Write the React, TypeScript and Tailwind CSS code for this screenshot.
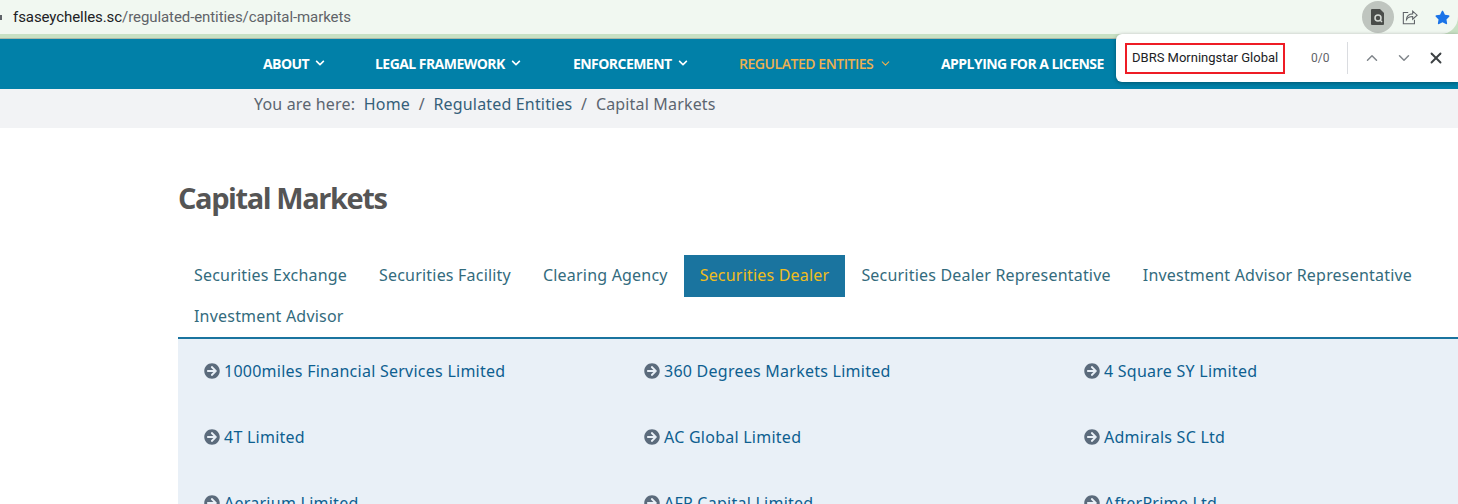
import React from 'react';
import { FaArrowCircleRight, FaChevronDown, FaStar } from 'react-icons/fa';
import { LuChevronUp, LuChevronDown, LuX } from 'react-icons/lu';

const navItems = [
    { label: 'ABOUT', width: 'w-[112px]', arrow: true },
    { label: 'LEGAL FRAMEWORK', width: 'w-[198px]', arrow: true },
    { label: 'ENFORCEMENT', width: 'w-[166px]', arrow: true },
    { label: 'REGULATED ENTITIES', width: 'w-[202px]', arrow: true, active: true },
    { label: 'APPLYING FOR A LICENSE', width: 'w-[170px]', arrow: false },
];

const tabs = [
    'Securities Exchange',
    'Securities Facility',
    'Clearing Agency',
    'Securities Dealer',
    'Securities Dealer Representative',
    'Investment Advisor Representative',
];

const companies = [
    '1000miles Financial Services Limited',
    '360 Degrees Markets Limited',
    '4 Square SY Limited',
    '4T Limited',
    'AC Global Limited',
    'Admirals SC Ltd',
    'Aerarium Limited',
    'AFP Capital Limited',
    'AfterPrime Ltd',
];

const App: React.FC = () => {
    return (
        <div className="relative h-[504px] w-[1458px] overflow-hidden bg-white font-['Noto_Sans',sans-serif]">
            {/* browser address bar */}
            <div className="h-[39px] border-b border-[#a9b8a8] bg-[#c8e1c4]">
                <div className="flex h-[34px] items-center justify-between rounded-br-[17px] bg-[#f1f8f1] pr-[8px]">
                    <div className="flex items-center">
                        <div className="mr-[11px] h-[5px] w-[2px] bg-[#5f6368]" />
                        <div className="font-['Roboto',sans-serif] text-[15px] tracking-[-0.08px] text-[#5f6368]">
                            <span className="text-[#202124]">fsaseychelles.sc</span>/regulated-entities/capital-markets
                        </div>
                    </div>
                    <div className="flex items-center">
                        <div className="flex h-[32px] w-[32px] items-center justify-center rounded-full bg-[#bfc5bf]">
                            <svg width="14" height="16" viewBox="0 0 14 16">
                                <path d="M1 0h8l4 4v11a1 1 0 0 1-1 1H1a1 1 0 0 1-1-1V1a1 1 0 0 1 1-1z" fill="#4a4d4a" />
                                <circle cx="7" cy="9" r="3" fill="none" stroke="#d5dad5" strokeWidth="1.5" />
                                <path d="M9 11l2 2" stroke="#d5dad5" strokeWidth="1.5" />
                            </svg>
                        </div>
                        <svg className="ml-[8px]" width="16" height="16" viewBox="0 0 18 18" fill="none" stroke="#5f6368" strokeWidth="1.2">
                            <path d="M7 4H1.5v12.5h12.5V12" />
                            <path d="M5 12c0-4 3-6.5 7-6.5V2.5l5 4.5-5 4.5V8.5c-3 0-5.5 1-7 3.5z" />
                        </svg>
                        <FaStar className="ml-[17px] text-[15px] text-[#1a73e8]" />
                    </div>
                </div>
            </div>

            {/* site nav */}
            <nav className="flex h-[50px] items-center bg-[#0180a8] pb-[2px] pl-[263px] font-['Open_Sans',sans-serif] text-[14px] font-bold tracking-[-0.55px]">
                {navItems.map((item) => (
                    <div
                        key={item.label}
                        className={`flex shrink-0 items-center gap-[6px] ${item.width} ${item.active ? 'font-semibold tracking-[-0.45px] text-[#eeb04f]' : 'text-white'}`}
                    >
                        {item.label}
                        {item.arrow && (item.active ? <LuChevronDown className="text-[13px]" /> : <FaChevronDown className="text-[10px]" />)}
                    </div>
                ))}
            </nav>

            {/* breadcrumb */}
            <div className="h-[39px] bg-[#f2f3f5] pl-[254px] pt-[4px] text-[16px] leading-[22px] tracking-[0.17px] text-[#5c6570]">
                You are here:&nbsp; <span className="text-[#35607a]">Home</span>&nbsp; /&nbsp; <span className="text-[#35607a]">Regulated Entities</span>&nbsp; /&nbsp; Capital Markets
            </div>

            <div className="pl-[178px]">
                <h1 className="pt-[50px] font-['Open_Sans',sans-serif] text-[29px] font-bold leading-[40px] tracking-[-1.43px] text-[#555555]">
                    Capital Markets
                </h1>

                <div className="mt-[37px] flex flex-wrap text-[16px] tracking-[0.2px]">
                    {tabs.map((tab) => (
                        <div
                            key={tab}
                            className={`h-[42px] px-[16px] leading-[41px] ${
                                tab === 'Securities Dealer' ? 'bg-[#1a749f] text-[#f0bd1c]' : 'text-[#336b7d]'
                            }`}
                        >
                            {tab}
                        </div>
                    ))}
                    <div className="h-[40px] px-[16px] leading-[39px] text-[#336b7d]">Investment Advisor</div>
                </div>

                <div className="grid h-[169px] grid-cols-[440px_440px_1fr] border-t-2 border-[#1a749f] bg-[#e9f0f7] pl-[26px] pt-[19px]">
                    {companies.map((name) => (
                        <div key={name} className="flex h-[66px] items-start gap-[4px] text-[16px] leading-[26px] tracking-[0.25px] text-[#0e5f90]">
                            <FaArrowCircleRight className="mt-[5px] text-[16px] text-[#5b6b7c]" />
                            {name}
                        </div>
                    ))}
                </div>
            </div>

            {/* browser find bar */}
            <div className="absolute left-[1116px] top-[34px] flex h-[48px] w-[342px] items-center rounded-l-[6px] bg-white shadow-[0_1px_4px_rgba(0,0,0,0.35)]">
                <div className="ml-[9px] flex h-[31px] w-[160px] items-center border-2 border-[#ee1c25] pl-[5px] font-['Roboto',sans-serif] text-[13px] text-[#202124]">
                    DBRS Morningstar Global
                </div>
                <span className="ml-[26px] font-['Roboto',sans-serif] text-[12px] text-[#5f6368]">0/0</span>
                <div className="ml-[18px] h-[32px] w-px bg-[#dadce0]" />
                <LuChevronUp className="ml-[15px] text-[18px] text-[#80868b]" />
                <LuChevronDown className="ml-[14px] text-[18px] text-[#80868b]" />
                <LuX className="ml-[14px] text-[18px] text-[#3c4043]" strokeWidth={2.5} />
            </div>
        </div>
    );
};

export default App;
